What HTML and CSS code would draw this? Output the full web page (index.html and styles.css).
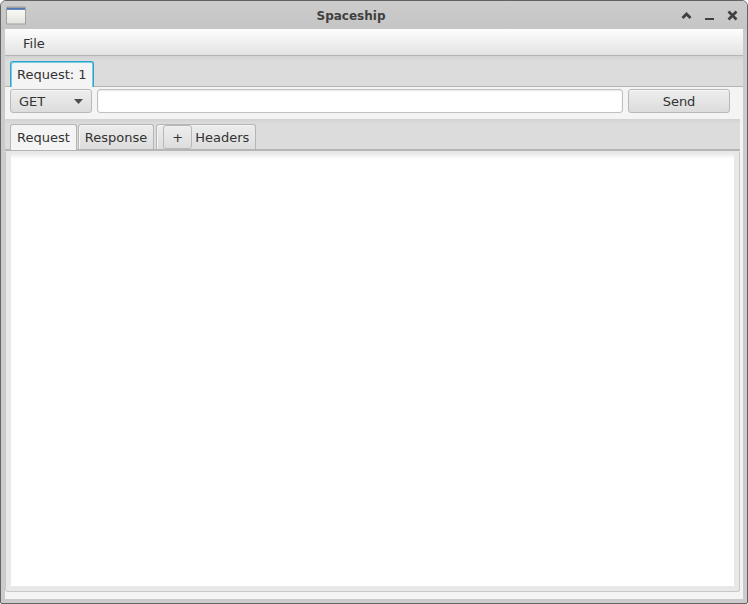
FILE: index.html
```html
<!DOCTYPE html>
<html lang="en">
<head>
<meta charset="utf-8">
<title>Spaceship</title>
<link rel="stylesheet" href="styles.css">
</head>
<body>
<div class="window">
  <header class="titlebar">
    <svg class="app-icon" width="22" height="20" viewBox="0 0 22 20" aria-hidden="true">
      <defs><linearGradient id="paper" x1="0" y1="0" x2="0" y2="1"><stop offset="0" stop-color="#fcfcfa"/><stop offset="1" stop-color="#e3e3de"/></linearGradient>
      <linearGradient id="strip" x1="0" y1="0" x2="0" y2="1"><stop offset="0" stop-color="#4670ae"/><stop offset="1" stop-color="#6f90c0"/></linearGradient></defs>
      <rect x="1" y="1.5" width="20" height="18" rx="1.5" fill="#a0a19c"/>
      <rect x="2" y="3" width="18" height="15.5" fill="url(#paper)"/>
      <rect x="2" y="3" width="18" height="2" fill="url(#strip)"/>
    </svg>
    <h1 class="title">Spaceship</h1>
    <div class="window-buttons">
      <button type="button" aria-label="Shade"><svg width="11" height="11" viewBox="0 0 11 11"><path d="M1.5 8 5.5 4 9.5 8" fill="none" stroke="#404040" stroke-width="2.8"/></svg></button>
      <button type="button" aria-label="Minimize"><svg width="11" height="11" viewBox="0 0 11 11"><path d="M1 8h9v2H1z" fill="#404040"/></svg></button>
      <button type="button" aria-label="Close"><svg width="11" height="11" viewBox="0 0 11 11"><path d="M1.5 1.5 9.5 9.5M9.5 1.5 1.5 9.5" fill="none" stroke="#404040" stroke-width="2.7"/></svg></button>
    </div>
  </header>
  <main class="content">
    <nav class="menubar"><button type="button">File</button></nav>
    <div class="tabs outer-tabs" role="tablist">
      <button type="button" class="tab selected focused" role="tab" aria-selected="true">Request: 1</button>
    </div>
    <form class="request-bar">
      <div class="method">
        <select aria-label="Method"><option>GET</option><option>POST</option><option>PUT</option><option>DELETE</option></select>
        <svg class="arrow" width="9" height="5" viewBox="0 0 9 5" aria-hidden="true"><path d="M0 0h9L4.5 5z" fill="#4d4d4d"/></svg>
      </div>
      <input class="url" type="text" aria-label="URL">
      <button class="send" type="button">Send</button>
    </form>
    <section class="details">
      <div class="tabs inner-tabs" role="tablist">
        <button type="button" class="tab selected" role="tab" aria-selected="true">Request</button>
        <button type="button" class="tab" role="tab">Response</button>
        <div class="tab headers-tab">
          <button type="button" class="add" aria-label="Add header">+</button>
          <button type="button" class="tab-label" role="tab">Headers</button>
        </div>
      </div>
      <div class="editor"><textarea aria-label="Request body"></textarea></div>
    </section>
  </main>
</div>
</body>
</html>
```
FILE: styles.css
```css
* { box-sizing: border-box; }

body {
  margin: 0;
  background: #fff;
  color: #333;
  font: 13px/16px "DejaVu Sans", sans-serif;
}

button, input, select, textarea {
  margin: 0;
  font: inherit;
  color: inherit;
  outline: none;
}

.window {
  display: flex;
  flex-direction: column;
  height: 100vh;
  padding: 0 4px 4px;
  border: 1px solid #636363;
  border-radius: 6px 6px 2px 2px;
  background: #cbcbcb;
}

.titlebar {
  display: flex;
  align-items: center;
  height: 28px;
  margin: 0 -4px;
  padding: 0 4px;
  border-radius: 5px 5px 0 0;
  background: linear-gradient(#cccccc, #c5c5c5);
}

.app-icon { display: block; }

.title {
  flex: 1;
  margin: 0;
  padding: 2px 6px 0 0;
  font-size: 12px;
  font-weight: bold;
  text-align: center;
  color: #3f3f3f;
}

.window-buttons {
  display: flex;
  gap: 12px;
  padding-right: 5px;
}

.window-buttons button {
  display: block;
  padding: 0;
  border: 0;
  background: none;
}

.window-buttons svg { display: block; }

.content {
  display: flex;
  flex: 1;
  flex-direction: column;
  min-height: 0;
  background: #f4f4f4;
}

.menubar {
  display: flex;
  height: 27px;
  padding: 0 10px;
  border-bottom: 1px solid #b5b5b5;
  background: linear-gradient(#fdfdfd, #e3e3e3);
}

.menubar button {
  padding: 4px 8px 0;
  border: 0;
  background: none;
}

.tabs {
  display: flex;
  align-items: flex-end;
  gap: 1px;
  height: 31px;
  padding-left: 5px;
  border-bottom: 1px solid #b5b5b5;
  background: linear-gradient(#d2d2d2, #dcdcdc 5px);
}

.tab {
  height: 25px;
  padding: 2px 6px 0;
  border: 1px solid #b5b5b5;
  border-bottom: 0;
  border-radius: 3px 3px 0 0;
  background: linear-gradient(#ececec, #dddddd);
  box-shadow: inset 1px 1px #f5f5f5;
}

.tab.selected {
  height: 26px;
  margin-bottom: -1px;
  padding-top: 1px;
  background: #f4f4f4;
}

.tab.focused {
  border-color: #26a9cf;
  box-shadow: inset 1px 1px #7fc9e0, inset -1px 0 #7fc9e0;
}

.request-bar {
  display: flex;
  gap: 5px;
  padding: 2px 13px 6px 5px;
}

.method {
  position: relative;
  width: 82px;
}

.method select, .send {
  height: 24px;
  padding: 1px 8px 0;
  border: 1px solid #b8b8b8;
  border-radius: 3px;
  background: linear-gradient(#eeeeee, #dcdcdc);
  box-shadow: inset 0 1px #f8f8f8;
}

.method select {
  display: block;
  width: 100%;
  appearance: none;
}

.arrow {
  position: absolute;
  top: 10px;
  right: 9px;
  pointer-events: none;
}

.url {
  flex: 1;
  min-width: 0;
  height: 24px;
  padding: 0 7px;
  border: 1px solid #c0c0c0;
  border-radius: 3px;
  background: #fff;
  box-shadow: inset 0 1px 2px #e8e8e8;
}

.send { width: 102px; }

.details {
  display: flex;
  flex: 1;
  flex-direction: column;
  min-height: 0;
  margin: 0 3px 7px 0;
}

.inner-tabs {
  height: 32px;
  border-bottom-width: 2px;
}

.headers-tab {
  display: flex;
  align-items: flex-start;
  gap: 3px;
  margin-left: 1px;
  padding: 0 6px;
}

.add {
  width: 29px;
  height: 24px;
  padding: 1px 0 0;
  border: 1px solid #b8b8b8;
  border-radius: 3px;
  background: linear-gradient(#eeeeee, #dddddd);
}

.tab-label {
  padding: 5px 0 0;
  border: 0;
  background: none;
}

.editor {
  display: flex;
  flex: 1;
  min-height: 0;
  padding: 2px 5px 5px;
  border: 1px solid #c8c8c8;
  border-top: 0;
  border-radius: 3px;
  background: #e8e8e8;
}

.editor textarea {
  flex: 1;
  min-width: 0;
  padding: 6px;
  border: 0;
  background: linear-gradient(#e8e8e8, #fff 6px);
  resize: none;
}
```
